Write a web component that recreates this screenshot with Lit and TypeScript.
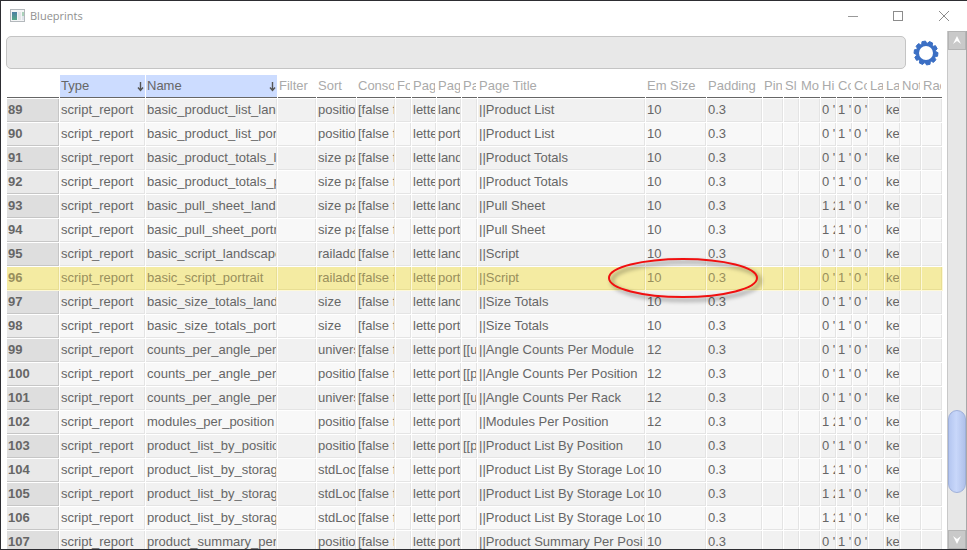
import { LitElement, html, css, svg, nothing } from "lit";
import { customElement } from "lit/decorators.js";
import { classMap } from "lit/directives/class-map.js";

interface Column {
  label: string;
  width: number; // 0 lets the column take the remaining space
  sorted?: boolean;
}

const COLUMNS: Column[] = [
  { label: "Type", width: 86, sorted: true },
  { label: "Name", width: 132, sorted: true },
  { label: "Filter", width: 39 },
  { label: "Sort", width: 40 },
  { label: "Conso", width: 39 },
  { label: "Fo", width: 16 },
  { label: "Pag", width: 25 },
  { label: "Pag", width: 25 },
  { label: "Pa", width: 16 },
  { label: "Page Title", width: 0 },
  { label: "Em Size", width: 61 },
  { label: "Padding", width: 56 },
  { label: "Pin", width: 21 },
  { label: "Sl", width: 16 },
  { label: "Mo", width: 21 },
  { label: "Hi", width: 16 },
  { label: "Co", width: 16 },
  { label: "Co", width: 16 },
  { label: "La", width: 16 },
  { label: "La", width: 16 },
  { label: "Not", width: 21 },
  { label: "Rac", width: 21 },
];

// name, sort, orientation, break, title, em size, hide
type Entry = [string, string, string, string, string, number, string];

const ENTRIES: Entry[] = [
  ["basic_product_list_land", "position", "land", "", "Product List", 10, "0 '"],
  ["basic_product_list_port", "position", "port", "", "Product List", 10, "0 '"],
  ["basic_product_totals_l", "size part", "land", "", "Product Totals", 10, "0 '"],
  ["basic_product_totals_p", "size part", "port", "", "Product Totals", 10, "0 '"],
  ["basic_pull_sheet_land", "size part", "land", "", "Pull Sheet", 10, "1 2"],
  ["basic_pull_sheet_portr", "size part", "port", "", "Pull Sheet", 10, "1 2"],
  ["basic_script_landscape", "railaddr", "land", "", "Script", 10, "0 '"],
  ["basic_script_portrait", "railaddr", "port", "", "Script", 10, "0 '"],
  ["basic_size_totals_land", "size", "land", "", "Size Totals", 10, "0 '"],
  ["basic_size_totals_port", "size", "port", "", "Size Totals", 10, "0 '"],
  ["counts_per_angle_per_", "univers", "port", "[[un", "Angle Counts Per Module", 12, "0 '"],
  ["counts_per_angle_per_", "position", "port", "[[p", "Angle Counts Per Position", 12, "0 '"],
  ["counts_per_angle_per_", "univers", "port", "[[un", "Angle Counts Per Rack", 12, "0 '"],
  ["modules_per_position", "position", "port", "", "Modules Per Position", 12, "1 2"],
  ["product_list_by_position", "position", "port", "[[p", "Product List By Position", 10, "0 '"],
  ["product_list_by_storag", "stdLoc", "port", "", "Product List By Storage Loc", 10, "1 2"],
  ["product_list_by_storag", "stdLoc", "port", "", "Product List By Storage Loc", 10, "1 2"],
  ["product_list_by_storag", "stdLoc", "port", "", "Product List By Storage Loc", 10, "1 2"],
  ["product_summary_per", "position", "port", "", "Product Summary Per Posi", 10, "0 '"],
];

const FIRST_ROW = 89;
const SELECTED_ROW = 96;

function cellsOf([name, sort, orient, brk, title, em, hide]: Entry): string[] {
  return [
    "script_report", name, "", sort, "[false f", "", "lette", orient, brk,
    "||" + title, String(em), "0.3", "", "", "", hide, "1 '", "0 '", "", "ke", "", "",
  ];
}

function gearPath(cx: number, cy: number, teeth: number, outer: number, inner: number): string {
  const points: string[] = [];
  const step = (Math.PI * 2) / teeth;
  for (let i = 0; i < teeth; i++) {
    const mid = i * step + 0.12;
    for (const [offset, radius] of [[-0.38, inner], [-0.24, outer], [0.24, outer], [0.38, inner]]) {
      const angle = mid + offset * step;
      points.push(`${(cx + Math.cos(angle) * radius).toFixed(2)} ${(cy + Math.sin(angle) * radius).toFixed(2)}`);
    }
  }
  return `M${points.join("L")}Z`;
}

@customElement("title-bar")
export class TitleBar extends LitElement {
  static styles = css`
    :host { display: flex; align-items: center; height: 30px; padding-left: 8px; }
    .name {
      flex: 1; margin: 0 0 0 5px; color: #909090;
      font: 11px/16px "Open Sans", "Noto Sans", sans-serif;
    }
    .control {
      width: 45px; height: 29px; padding: 0; border: 0; background: none;
      display: grid; place-items: center;
    }
    .last { width: 47px; }
    svg { display: block; }
  `;

  render() {
    return html`
      <svg width="16" height="14" viewBox="0 0 16 14" aria-hidden="true">
        <defs>
          <linearGradient id="pane" x1="0" y1="0" x2="0" y2="1">
            <stop offset="0" stop-color="#4d7fa3" /><stop offset="1" stop-color="#58a887" />
          </linearGradient>
        </defs>
        <rect x="1.5" y="0.5" width="14" height="12" fill="#f4f5f6" stroke="#b3b8bc" />
        <rect x="3" y="3" width="5" height="8" fill="url(#pane)" />
        <rect x="9" y="3" width="3" height="8" fill="#e3e5e8" />
        <rect x="13" y="3" width="2" height="4" fill="#a9d1b9" />
        <rect x="13" y="7" width="2" height="4" fill="#dfe4ea" />
      </svg>
      <h1 class="name">Blueprints</h1>
      <button class="control" aria-label="Minimize">
        <svg width="10" height="10"><path d="M0 5.5H10" stroke="#999" /></svg>
      </button>
      <button class="control" aria-label="Maximize">
        <svg width="10" height="10"><rect x="0.5" y="0.5" width="9" height="9" fill="none" stroke="#8c8c8c" /></svg>
      </button>
      <button class="control last" aria-label="Close">
        <svg width="10" height="10"><path d="M0 0L10 10M10 0L0 10" stroke="#8c8c8c" /></svg>
      </button>
    `;
  }
}

@customElement("scroll-rail")
export class ScrollRail extends LitElement {
  static styles = css`
    :host {
      display: flex; flex-direction: column; box-sizing: border-box; width: 20px;
      background: #e7e7e7; border-left: 1px solid #c8c8c8; border-right: 1px solid #a8a8a8;
    }
    .arrow {
      flex: none; height: 19px; padding: 0; border: 1px solid #b4b4b4; background: #c9c9c9;
      display: grid; place-items: center;
    }
    .before { flex: 361; }
    .thumb {
      flex: 82; border: 1px solid #9fb0da; border-radius: 9px;
      background: linear-gradient(90deg, #b4c6f0, #c8d7fa 45%, #b0c1ea);
    }
    .after { flex: 37; }
  `;

  render() {
    return html`
      <button class="arrow" aria-label="Scroll up">
        <svg width="10" height="9"><path d="M5 0L9 8L5 5L1 8Z" fill="#fff" /></svg>
      </button>
      <div class="before"></div>
      <div class="thumb"></div>
      <div class="after"></div>
      <button class="arrow" aria-label="Scroll down">
        <svg width="10" height="9"><path d="M5 9L9 1L5 4L1 1Z" fill="#fff" /></svg>
      </button>
    `;
  }
}

@customElement("blueprint-table")
export class BlueprintTable extends LitElement {
  static styles = css`
    :host { display: block; position: relative; }
    table {
      width: 100%; table-layout: fixed; border-collapse: separate; border-spacing: 0;
      font: 13px/22px "Liberation Sans", Arial, sans-serif; color: #666;
    }
    th, td {
      box-sizing: border-box; height: 24px; padding: 0 1px; text-align: left; font-weight: 400;
      white-space: pre; overflow: hidden;
      border: solid #fff; border-width: 0 1px 1px 0;
    }
    .clip { display: block; height: 23px; overflow: hidden; }
    thead th { color: #aaa; box-shadow: inset 0 -1px #666; }
    thead .sorted { color: #666; background: #ccdcff; }
    .sorted .clip { display: flex; justify-content: space-between; }
    .sorted svg { margin-top: 7px; }
    tbody th {
      font-weight: 700; background: #e9e9e9; box-shadow: inset -1px -1px #c6c6c6;
    }
    td { background: #f8f8f8; box-shadow: inset -1px -1px #e4e4e4; }
    .odd td { background: #f1f1f1; }
    .odd th { background: #dedede; }
    .selected th, .selected td {
      color: #998f5c; background: #f4eba2; box-shadow: inset -1px -1px #e8de93; border-color: #fdf8d8;
    }
    .mark {
      position: absolute; left: 599px; top: 180px; width: 156px; height: 46px;
      overflow: visible; filter: drop-shadow(3px 3px 2px rgba(0, 0, 0, 0.5)); pointer-events: none;
    }
  `;

  private widths() {
    return COLUMNS.map((column) =>
      column.width ? html`<col style="width:${column.width}px" />` : html`<col />`,
    );
  }

  render() {
    return html`
      <table>
        <colgroup><col style="width:53px" />${this.widths()}</colgroup>
        <thead>
          <tr>
            <th></th>
            ${COLUMNS.map(
              (column) => html`<th scope="col" class=${classMap({ sorted: !!column.sorted })}><span class="clip">${column.label}${
                column.sorted
                  ? html`<svg width="8" height="10" viewBox="0 0 8 10">${svg`<path d="M4.5 0V8M2 5.5L4.5 8.5L7 5.5" fill="none" stroke="#555" stroke-width="1.4" />`}</svg>`
                  : nothing
              }</span></th>`,
            )}
          </tr>
        </thead>
        <tbody>
          ${ENTRIES.map((entry, index) => {
            const row = FIRST_ROW + index;
            return html`<tr class=${classMap({ odd: row % 2 === 1, selected: row === SELECTED_ROW })}>
              <th scope="row"><span class="clip">${row}</span></th>
              ${cellsOf(entry).map((text) => html`<td><span class="clip">${text}</span></td>`)}
            </tr>`;
          })}
        </tbody>
      </table>
      <svg class="mark" viewBox="0 0 156 46" aria-hidden="true">
        <ellipse cx="77" cy="23" rx="74" ry="19" fill="none" stroke="#f01010" stroke-width="2" />
      </svg>
    `;
  }
}

@customElement("app-root")
export class AppRoot extends LitElement {
  static styles = css`
    :host {
      display: flex; flex-direction: column; box-sizing: border-box; height: 100vh;
      overflow: hidden; background: #fff; border: solid #2d2d32; border-width: 1px 0 1px 1px;
    }
    title-bar { flex: none; }
    .body { flex: 1; min-height: 0; display: flex; }
    .content { flex: 1; min-width: 0; overflow: hidden; padding: 5px 4px 0 5px; }
    .tools { display: flex; align-items: center; gap: 6px; margin-right: 3px; }
    .search {
      flex: 1; min-width: 0; box-sizing: border-box; height: 33px; padding: 0 8px;
      border: 1px solid #c4c4c4; border-radius: 5px; background: #e8e8e8;
      font: 13px "Liberation Sans", Arial, sans-serif;
    }
    .settings { width: 28px; height: 28px; padding: 0; border: 0; background: none; }
    .settings svg { display: block; }
    blueprint-table { margin: 6px 0 0 1px; }
    scroll-rail { flex: none; }
  `;

  render() {
    return html`
      <title-bar></title-bar>
      <div class="body">
        <main class="content">
          <div class="tools">
            <input class="search" type="text" aria-label="Search blueprints" />
            <button class="settings" aria-label="Settings">
              <svg width="28" height="28" viewBox="0 0 28 28">
                <path d=${gearPath(14, 14, 10, 12, 10)} fill="#3b6fc4" stroke="#3b6fc4" stroke-linejoin="round" />
                <circle cx="14" cy="14" r="7" fill="#fff" />
              </svg>
            </button>
          </div>
          <blueprint-table></blueprint-table>
        </main>
        <scroll-rail></scroll-rail>
      </div>
    `;
  }
}
